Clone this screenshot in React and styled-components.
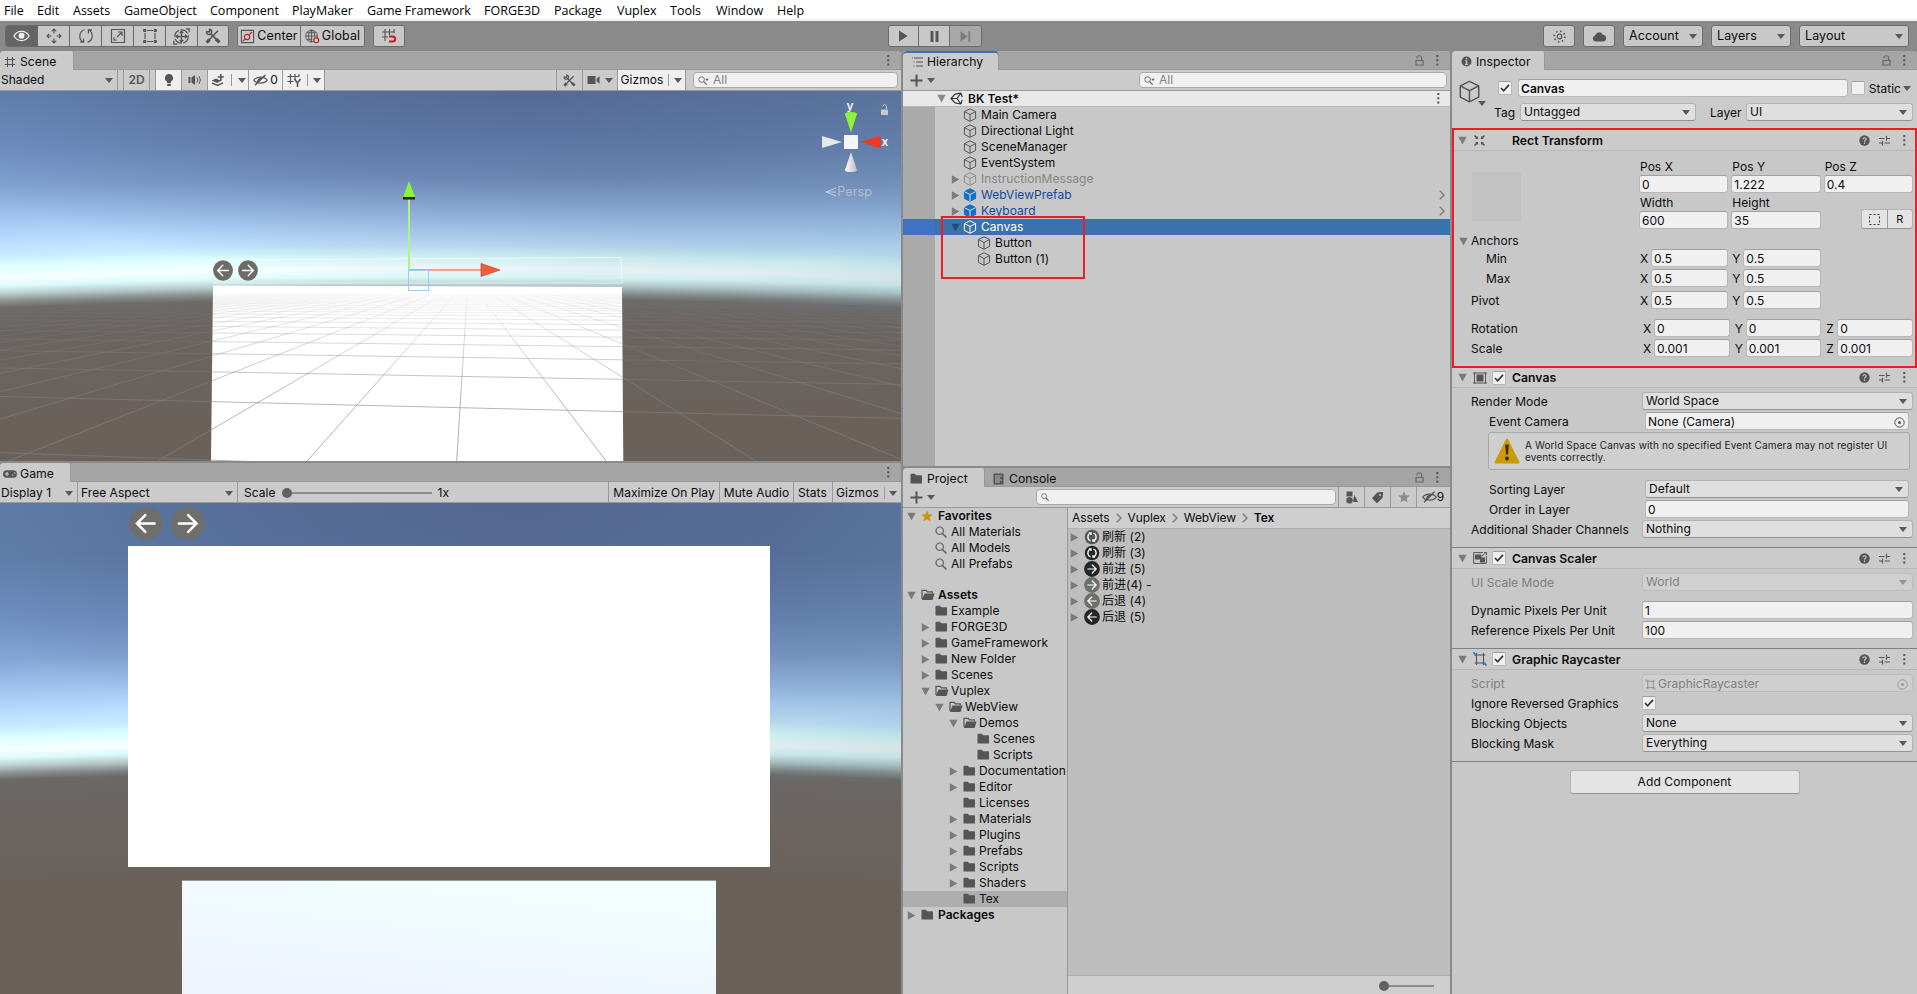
import styled, { createGlobalStyle, css } from 'styled-components';

const GlobalStyle = createGlobalStyle`
  *, *::before, *::after {
    box-sizing: border-box;
  }

  body {
    margin: 0;
    overflow: hidden;
    background: #8a8a8a;
    color: #0c0c0c;
    font-family: Inter, 'Noto Sans CJK SC', sans-serif;
    font-size: 12px;
    letter-spacing: 0.04px;
    line-height: 16px;
    white-space: nowrap;
  }

  svg {
    display: block;
    flex: none;
  }
`;

/* ---------- icons ---------- */

const Svg = ({ w = 16, h, box = '0 0 16 16', color = '#555', children, ...rest }) => (
  <svg
    width={w}
    height={h || w}
    viewBox={box}
    fill="none"
    stroke={color}
    strokeWidth="1.2"
    {...rest}
  >
    {children}
  </svg>
);

const Caret = ({ color = '#585858' }) => (
  <Svg w={8} h={5} box="0 0 8 5">
    <path d="M0 0h8L4 5z" fill={color} stroke="none" />
  </Svg>
);

const Fold = ({ open, color = '#7b7b7b' }) => (
  <Svg w={9} h={9} box="0 0 9 9">
    <path d={open ? 'M.3 .7h8.4L4.5 8.5z' : 'M.8 .2v8.6L8.4 4.5z'} fill={color} stroke="none" />
  </Svg>
);

const Kebab = () => (
  <Svg w={3} h={11} box="0 0 3 11">
    <path d="M.3 0h2v2h-2zM.3 4.3h2v2h-2zM.3 8.6h2v2h-2z" fill="#555" stroke="none" />
  </Svg>
);

const Lock = () => (
  <Svg w={9} h={11} box="0 0 9 11" color="#666">
    <path d="M2 3.5V2.7C2 .1 6.6 .1 6.6 2.7V5.5M1 5.5h7v4.5H1z" />
  </Svg>
);

const Cube = ({ size = 14, color = '#555', fill = 'none', line }) => (
  <Svg w={size} box="0 0 14 14" color={color} strokeWidth={size > 16 ? 0.9 : 1}>
    <path d="M7 .8l5.6 2.8v6.8L7 13.3 1.4 10.4V3.6z" fill={fill} strokeLinejoin="round" />
    <path d="M1.4 3.6L7 6.5l5.6-2.9M7 6.5v6.8" stroke={line || color} />
  </Svg>
);

const Folder = () => (
  <Svg w={13} h={12} box="0 0 13 12">
    <path d="M.5 1.5q0-.8.8-.8h3.6l1.3 1.6h5q.8 0 .8.8v7.4H.5z" fill="#555" stroke="none" />
  </Svg>
);

const FolderOpen = () => (
  <Svg w={14} h={12} box="0 0 14 12">
    <path d="M1 10V1.3h4.2l1.2 1.5h4.9v1.5" stroke="#555" />
    <path d="M3.5 4.6h10L11.6 11H.9z" fill="#555" stroke="none" />
  </Svg>
);

const SearchGlass = ({ size = 12, menu }) => (
  <Svg w={menu ? size + 2 : size} h={size} box={menu ? '0 0 14.5 12' : '0 0 12 12'} color="#666" strokeWidth="1.2">
    <circle cx="4.7" cy="4.7" r="3.7" />
    <path d="M7.5 7.5l4 4" strokeWidth="1.6" />
    {menu && <path d="M9.4 3.6h5l-2.5 3z" fill="#666" stroke="none" />}
  </Svg>
);

const Plus = () => (
  <Svg w={13} box="0 0 13 13">
    <path d="M6.5 .5v12M.5 6.5h12" strokeWidth="2" />
  </Svg>
);

const HiddenEye = () => (
  <Svg w={15} h={12} box="0 0 15 12">
    <path d="M.8 6.2C3.6 2 11.4 2 14.2 6.2 11.4 10.2 3.6 10.2 .8 6.2z" />
    <path d="M4 9C3.4 5 7 3 10 3.6L5 9z" fill="#555" stroke="none" />
    <path d="M2 11.3L12.5 .7" strokeWidth="1.4" />
  </Svg>
);

const ToolsIcon = ({ size = 16 }) => (
  <Svg w={size}>
    <path d="M3.5 12.5L13 2.8" strokeWidth="1.6" />
    <path d="M1.6 14.6l3-3.2" strokeWidth="3.2" />
    <path d="M5.6 5.6l6 6" strokeWidth="1.6" />
    <path d="M11 11l3.4 3.4" strokeWidth="3.2" />
    <path d="M1.5 3.6A2.6 2.6 0 1 0 4.6 1.3L4.4 4z" strokeWidth="1.5" />
  </Svg>
);

const GridIcon = () => (
  <Svg w={12} box="0 0 12 12" strokeWidth="1.1">
    <path d="M3.5 1v10M8.5 1v10M.8 3.5h10.4M.8 8.5h10.4" />
  </Svg>
);

const Target = ({ color = '#555' }) => (
  <Svg w={11} box="0 0 11 11" color={color} strokeWidth="1">
    <circle cx="5.5" cy="5.5" r="4.7" />
    <circle cx="5.5" cy="5.5" r="1.5" fill={color} stroke="none" />
  </Svg>
);

const Tick = () => (
  <Svg w={10} h={8} box="0 0 10 8" color="#333" strokeWidth="1.6">
    <path d="M1 4l2.6 2.8L9 .9" />
  </Svg>
);

const Star = ({ color }) => (
  <Svg w={12} box="0 0 12 12">
    <path
      d="M6 .3l1.6 3.9 4.2.3-3.2 2.7 1 4.2L6 9.2l-3.6 2.2 1-4.2L.2 4.5l4.2-.3z"
      fill={color}
      stroke="none"
    />
  </Svg>
);

const Help = () => (
  <Svg w={11} box="0 0 11 11">
    <circle cx="5.5" cy="5.5" r="5.2" fill="#555" stroke="none" />
    <path d="M3.9 4.2C4 2.2 7.2 2.3 7.1 4.2 7 5.2 5.6 5.2 5.5 6.7M5.5 7.5v1.4" stroke="#cbcbcb" />
  </Svg>
);

const Preset = () => (
  <Svg w={11} box="0 0 11 11" strokeWidth="1.1">
    <path d="M0 3.5h5.5M8 3.5h3M7.5 .8v5M0 8h3M5.5 8H11M3.5 5.8v4.6" />
  </Svg>
);

const Chevron = () => (
  <Svg w={6} h={10} box="0 0 6 10" color="#7d7d7d" strokeWidth="1.4">
    <path d="M.8 .8L5 5 .8 9.2" />
  </Svg>
);

const RoundArrow = ({ size = 16, color, back }) => (
  <Svg w={size} box="0 0 32 32">
    <circle cx="16" cy="16" r="15.8" fill={color} stroke="none" />
    <path
      d="M7.5 16h16.5M16.4 8l8 8-8 8"
      stroke="#fff"
      strokeWidth="2.4"
      strokeLinecap="round"
      transform={back ? 'rotate(180 16 16)' : undefined}
    />
  </Svg>
);

const RoundRefresh = ({ color }) => (
  <Svg w={16} box="0 0 32 32">
    <circle cx="16" cy="16" r="14.5" fill={color} stroke="none" />
    <path
      d="M13 8c-7 3-7 13 0 16M19 8c7 3 7 13 0 16M10 8h4v4M22 24h-4v-4"
      stroke="#fff"
      strokeWidth="2.6"
    />
  </Svg>
);

const RaycasterIcon = ({ size = 14, color = '#555', accent = '#2b7fc4' }) => (
  <Svg w={size} box="0 0 14 14" color={color}>
    <path d="M3.5 1v12M10.5 1v12M1.5 3h11M1.5 11h11" strokeWidth="1.1" />
    <path d="M.3 .3l3 3M11.5 11.5l2 2" stroke={accent} strokeWidth="1.8" />
  </Svg>
);

const moveIcon = (
  <Svg>
    <path d="M8 1v4.5M8 10.5V15M1 8h4.5M10.5 8H15M5.8 3.2L8 1l2.2 2.2M5.8 12.8L8 15l2.2-2.2M3.2 5.8L1 8l2.2 2.2M12.8 5.8L15 8l-2.2 2.2" />
  </Svg>
);
const rotateIcon = (
  <Svg>
    <path d="M6.5 1.7C.5 3.5 .4 11.5 5.3 14M2 14.2h3.6v-3.6M9.5 14.3c6-1.8 6.1-9.8 1.2-12.3M14 1.8h-3.6v3.6" />
  </Svg>
);
const scaleIcon = (
  <Svg>
    <path d="M1.5 1.5h13v13h-13zM4 9.2V12h2.8M7 9l4.7-4.7M8 4h4v4" />
  </Svg>
);
const rectIcon = (
  <Svg>
    <path d="M3 5v6M13 5v6M5 2.5h6M5 13.5h6" />
    <path d="M1.2 1h3v3h-3zM11.8 1h3v3h-3zM1.2 12h3v3h-3zM11.8 12h3v3h-3z" fill="#555" stroke="none" />
  </Svg>
);
const transformIcon = (
  <Svg w={17}>
    <circle cx="8" cy="8" r="6.3" strokeDasharray="8 1.5" />
    <path d="M8 3v10M3 8h10M6.3 4.7L8 3l1.7 1.7M6.3 11.3L8 13l1.7-1.7M4.7 6.3L3 8l1.7 1.7M11.3 6.3L13 8l-1.7 1.7M12 .8h3.2V4M.8 12v3.2H4" />
  </Svg>
);
const eyeIcon = (
  <Svg w={17} h={14} box="0 0 17 14" color="#eee">
    <path d="M.9 7C4.5 .9 12.5 .9 16.1 7 12.5 13.1 4.5 13.1 .9 7z" />
    <circle cx="8.5" cy="6.8" r="3" fill="#eee" stroke="none" />
  </Svg>
);

/* ---------- menu and main toolbar ---------- */

const Editor = styled.div`
  display: flex;
  flex-direction: column;
  width: 1917px;
  height: 994px;
`;

const MenuBar = styled.nav`
  display: flex;
  height: 21px;
  padding-left: 4px;
  background: #fff;
  border-bottom: 2px solid #f0f0f0;
  font-family: 'Open Sans', 'Noto Sans', sans-serif;
  font-size: 12.5px;
  line-height: 21px;
  letter-spacing: 0;
`;

const MenuItem = styled.span`
  width: ${(p) => p.$w}px;
  color: #000;
`;

const MainBar = styled.div`
  display: flex;
  align-items: center;
  height: 30px;
  padding: 0 8px 0 5px;
  background: #8a8a8a;
`;

const ButtonGroup = styled.div`
  display: flex;
  height: 22px;
  margin-right: 8px;
  border: 1px solid #6b6b6b;
  border-radius: 3px;
  overflow: hidden;
`;

const ToolButton = styled.button`
  display: flex;
  align-items: center;
  justify-content: center;
  gap: 2px;
  width: ${(p) => p.$w || 32}px;
  padding: 0;
  border: 0;
  border-right: 1px solid #6b6b6b;
  background: ${(p) => (p.$on ? '#656565' : p.$off ? '#a8a8a8' : '#c8c8c8')};
  color: inherit;
  font: inherit;
  font-size: 12.5px;
  letter-spacing: 0.1px;

  &:last-child {
    border-right: 0;
  }
`;

const Selects = styled.div`
  display: flex;
  gap: 8px;
`;

const MainSelect = styled.div`
  display: flex;
  align-items: center;
  justify-content: space-between;
  width: ${(p) => p.$w}px;
  height: 22px;
  padding: 0 5px;
  border: 1px solid #6b6b6b;
  border-radius: 3px;
  background: #c8c8c8;
  font-size: 12.5px;
  letter-spacing: 0.1px;
`;

const Push = styled.span`
  flex: ${(p) => (p.$w ? 'none' : 1)};
  width: ${(p) => (p.$w ? `${p.$w}px` : 'auto')};
`;

/* ---------- shared panel parts ---------- */

const Workspace = styled.div`
  display: grid;
  grid-template-columns: 901px 547px 465px;
  column-gap: 2px;
  height: 943px;
`;

const Column = styled.div`
  display: grid;
  grid-template-rows: ${(p) => p.$rows};
  row-gap: 2px;
  min-width: 0;
  min-height: 0;
`;

const Panel = styled.section`
  position: relative;
  display: flex;
  flex-direction: column;
  min-width: 0;
  min-height: 0;
  border-radius: 4px 4px 0 0;
  background: #c8c8c8;
  overflow: hidden;
`;

const TabBar = styled.header`
  display: flex;
  align-items: center;
  flex: none;
  height: 19px;
  padding-right: 11px;
  background: #a5a5a5;
  border-bottom: 1px solid #999;
`;

const Tab = styled.div`
  display: flex;
  align-items: center;
  gap: ${(p) => p.$gap || 5}px;
  width: ${(p) => p.$w}px;
  height: 19px;
  margin-bottom: -1px;
  padding: 2px 0 0 ${(p) => p.$pad}px;
  font-size: 12.2px;
  ${(p) =>
    p.$active &&
    css`
      background: #cbcbcb;
      border-right: 1px solid #999;
      border-radius: 3px 3px 0 0;
    `}
  ${(p) => p.$focus && 'box-shadow: inset 0 2px 0 #3a72b0;'}
`;

const TabTools = styled.div`
  display: flex;
  align-items: center;
  gap: 12px;
  margin-left: auto;
`;

const Toolbar = styled.div`
  display: flex;
  align-items: center;
  flex: none;
  height: 21px;
  background: #cbcbcb;
  border-bottom: 1px solid #999;
`;

const Cell = styled.div`
  display: flex;
  align-items: center;
  justify-content: ${(p) => p.$align || 'center'};
  gap: ${(p) => p.$gap || 0}px;
  flex: none;
  width: ${(p) => p.$w}px;
  height: 20px;
  padding: ${(p) => (p.$low ? 2 : 0)}px ${(p) => p.$pad || 0}px 0;
  border-right: 1px solid ${(p) => (p.$plain ? 'transparent' : '#999')};
  background: ${(p) => (p.$on ? '#efefef' : 'transparent')};
  color: ${(p) => p.$color || 'inherit'};
  font-weight: ${(p) => (p.$bold ? 600 : 400)};
`;

const Split = styled.i`
  width: 1px;
  height: 12px;
  background: #999;
`;

const Search = styled.div`
  display: flex;
  align-items: center;
  gap: 4px;
  width: ${(p) => p.$w}px;
  height: 16px;
  margin: ${(p) => p.$m || '0'};
  padding-left: 4px;
  border: 1px solid #a9a9a9;
  border-radius: 4px;
  background: #f0f0f0;
  color: #838383;
`;

const SliderTrack = styled.div`
  display: flex;
  align-items: center;
  width: ${(p) => p.$w}px;

  &::before {
    content: '';
    width: 10px;
    height: 10px;
    border-radius: 50%;
    background: #616161;
  }

  &::after {
    content: '';
    flex: 1;
    height: 2px;
    background: #8c8c8c;
  }
`;

/* ---------- viewports ---------- */

const Viewport = styled.div`
  position: relative;
  flex: 1;
  min-height: 0;
  overflow: hidden;
  /* sky over a slightly curved horizon, darker towards the zenith */
  background:
    radial-gradient(
      ellipse 620px ${(p) => p.$h * 0.9}px at 57% 0,
      rgba(58, 68, 108, 0.42),
      rgba(58, 70, 112, 0.32) 45%,
      rgba(58, 70, 112, 0) 100%
    ),
    linear-gradient(90deg, rgba(90, 120, 140, 0) 55%, rgba(90, 120, 140, 0.2)) 0 0 / 100%
      ${(p) => p.$h}px no-repeat,
    radial-gradient(
      circle 11700px at 455px ${(p) => p.$h + 11219}px,
      #6a615b 0 11120px,
      #6a6562 11205px,
      #6c6866 11228px,
      #868c8a 11234px,
      #b8cccb 11242px,
      #dcfbfb 11250px,
      #f6ffff 11258px,
      #dcffff 11270px,
      #c8eaff 11281px,
      #b8dcff 11296px,
      #a0c4f0 11318px,
      #83a4d4 11350px,
      #7191c4 11388px,
      #6482ae 11450px,
      #6380ac 11520px
    );
`;

const Drawing = styled.svg`
  width: 100%;
  height: 100%;
`;

const Persp = styled.span`
  position: absolute;
  right: 29px;
  top: 93px;
  color: #c8cdd4;
  font-size: 12.5px;
  letter-spacing: 0.1px;
  opacity: 0.75;
`;

// Floor grid in one-point perspective.
const VP = { x: 468, y: 189 };
const depthLines = Array.from({ length: 36 }, (_, i) => VP.x - 11.3 + (i - 18) * 149.5);
const crossLines = Array.from({ length: 26 }, (_, i) => 1 / (0.00528 + i * 0.00254));

function FloorGrid() {
  return (
    <g stroke="url(#fade)" strokeWidth="1" fill="none">
      {depthLines.map((x) => (
        <line key={x} x1={VP.x} y1={VP.y} x2={x} y2={VP.y + 181} />
      ))}
      {crossLines.map((d) => {
        const slope = d * 0.00019;
        return (
          <line
            key={d}
            x1="0"
            y1={VP.y + d - 468 * slope}
            x2="901"
            y2={VP.y + d + 433 * slope}
          />
        );
      })}
    </g>
  );
}

function SceneView() {
  return (
    <Viewport $h={217}>
      <Drawing viewBox="0 0 901 370">
        <defs>
          <linearGradient id="fade" gradientUnits="userSpaceOnUse" x1="0" y1="200" x2="0" y2="370">
            <stop offset="0" stopColor="#808080" stopOpacity="0" />
            <stop offset=".25" stopColor="#808080" stopOpacity=".26" />
            <stop offset=".6" stopColor="#808080" stopOpacity=".55" />
            <stop offset="1" stopColor="#808080" stopOpacity=".65" />
          </linearGradient>
          <linearGradient id="cone" x1="0" x2="1">
            <stop offset="0" stopColor="#fff" />
            <stop offset="1" stopColor="#b9bdc4" />
          </linearGradient>
        </defs>
        <path d="M213 194.5L622 196l1.3 174H211z" fill="#fff" />
        <FloorGrid />
        <path d="M213 174v-5L621 166.500l1 25.500H213" fill="none" stroke="#fff" strokeOpacity=".6" />
        <g>
          <path d="M409 108v71" stroke="#adf57e" strokeWidth="2" />
          <path d="M403 105.500h12v3h-12z" fill="#1c2a14" />
          <path d="M409 90l6 16h-12z" fill="#8df43a" />
          <path d="M409 179h72" stroke="#ff9b8b" strokeWidth="2" />
          <path d="M481 172.500v13l19-6.500z" fill="#f85a3a" stroke="#a83a26" strokeWidth=".6" />
          <rect x="408.500" y="179.500" width="20" height="20" fill="none" stroke="#9ccaf6" />
        </g>
        <g>
          <svg x="213" y="169" width="20" height="21" preserveAspectRatio="none" viewBox="0 0 32 32">
            <RoundArrow size={32} color="#6d6a68" back />
          </svg>
          <svg x="238" y="169" width="20" height="21" preserveAspectRatio="none" viewBox="0 0 32 32">
            <RoundArrow size={32} color="#6d6a68" />
          </svg>
        </g>
        <g>
          <rect x="844" y="44" width="14" height="14" fill="#f3f5f9" />
          <path d="M845 23q0-2 6-2t6 2l-6 18.500z" fill="#8df43a" />
          <path d="M845 79q0 2 6 2t6-2l-6-18z" fill="url(#cone)" />
          <path d="M822 45v12l20-6z" fill="#e4e7ec" />
          <path d="M879 45q2 0 2 6t-2 6l-18-6z" fill="#ee3a20" />
          <path d="M836 97l-10 4 10 4M826 101h10" fill="none" stroke="#c3cedd" />
          <path d="M881 18.500h7v5.500h-7z" fill="#c4c8cf" />
          <path d="M882.500 15q2.500-3 4 0v3" fill="none" stroke="#c4c8cf" />
          <text x="846.500" y="19" fill="#f2f4f8" fontSize="12" fontWeight="600">
            y
          </text>
          <text x="881.500" y="55" fill="#f2f4f8" fontSize="12" fontWeight="600">
            x
          </text>
        </g>
      </Drawing>
      <Persp>Persp</Persp>
    </Viewport>
  );
}

function GameView() {
  return (
    <Viewport $h={277}>
      <Drawing viewBox="0 0 901 491">
        <defs>
          <linearGradient id="keys" x1=".8" y1="0" x2=".35" y2="1">
            <stop offset="0" stopColor="#f3ffff" />
            <stop offset=".6" stopColor="#f0f8ff" />
            <stop offset="1" stopColor="#eef5fd" />
          </linearGradient>
        </defs>
        <rect x="128" y="43" width="642" height="321" fill="#fff" />
        <rect x="182" y="377" width="534" height="114" fill="url(#keys)" />
        <path d="M182 377.500h534" stroke="#9b9a98" />
        <svg x="129" y="3.500" width="33.500" height="34" viewBox="0 0 32 32">
          <RoundArrow size={32} color="#6e6e6a" back />
        </svg>
        <svg x="171" y="3.500" width="33.500" height="34" viewBox="0 0 32 32">
          <RoundArrow size={32} color="#6e6e6a" />
        </svg>
      </Drawing>
    </Viewport>
  );
}

function ScenePanel() {
  return (
    <Panel>
      <TabBar>
        <Tab $active $w={74} $pad={4} $gap={4}>
          <GridIcon />
          Scene
        </Tab>
        <TabTools>
          <Kebab />
        </TabTools>
      </TabBar>
      <Toolbar>
        <Cell $w={118} $pad={1}>
          Shaded
          <Push />
          <Caret />
          <Push $w={3} />
        </Cell>
        <Cell $w={6} />
        <Cell $w={26} $bold $color="#555">
          2D
        </Cell>
        <Cell $w={6} />
        <Cell $w={26} $on>
          <Svg w={10} h={14} box="0 0 10 14">
            <path
              d="M5 1a4 4 0 0 1 2 7.500V10H3V8.500A4 4 0 0 1 5 1zM3.300 10.800h3.400V13H3.300z"
              fill="#555"
              stroke="none"
            />
          </Svg>
        </Cell>
        <Cell $w={26}>
          <Svg w={14} h={12} box="0 0 14 12">
            <path d="M.5 3h2v6h-2zM3.500 3.500L7 1v10L3.500 8.500z" fill="#555" stroke="none" />
            <path d="M9 3.500q1.500 2.500 0 5M11 2q2.800 4 0 8" strokeWidth="1" />
          </Svg>
        </Cell>
        <Cell $w={41} $on $gap={6}>
          <Svg w={14} h={13} box="0 0 14 13">
            <path d="M.5 6.500L5 4.500l3 1.500 4-.5-5.500 3.500z" fill="#555" stroke="none" />
            <path d="M1 8.800l5.500 2.700L12 8.800" strokeWidth="1.400" />
            <path d="M9.800 0v6M6.800 3h6" strokeWidth="1.500" />
          </Svg>
          <Split />
          <Caret />
        </Cell>
        <Cell $w={34} $on $gap={2}>
          <HiddenEye />0
        </Cell>
        <Cell $w={42} $on $gap={5}>
          <Svg w={15} h={14} box="0 0 15 14">
            <path d="M3.500 1v10M8 1v6M.5 3.500h12M.5 8.500h6M12 1v2" />
            <path d="M7.500 6l3 4 3-4M10.500 10v4" strokeWidth="1.600" />
          </Svg>
          <Split />
          <Caret />
        </Cell>
        <Push />
        <Cell $w={1} />
        <Cell $w={26}>
          <ToolsIcon size={13} />
        </Cell>
        <Cell $w={35} $gap={5}>
          <Svg w={13} h={10} box="0 0 13 10">
            <path d="M.5 1h8v8h-8zM9.500 4l3-3v8l-3-3z" fill="#555" stroke="none" />
          </Svg>
          <Caret />
        </Cell>
        <Cell $w={68} $on $gap={5}>
          Gizmos
          <Split />
          <Caret />
        </Cell>
        <Search $w={205} $m="0 3px 0 7px">
          <SearchGlass size={9} menu />
          <span>All</span>
        </Search>
      </Toolbar>
      <SceneView />
    </Panel>
  );
}

function GamePanel() {
  return (
    <Panel>
      <TabBar>
        <Tab $active $w={71} $pad={3} $gap={3}>
          <Svg w={14} h={10} box="0 0 14 10">
            <rect x="0" y="1.300" width="14" height="7.400" rx="3.700" fill="#555" stroke="none" />
            <path d="M2 5h4M4 3v4M9 6h1.500M11 4h1.500" stroke="#cbcbcb" />
          </Svg>
          Game
        </Tab>
        <TabTools>
          <Kebab />
        </TabTools>
      </TabBar>
      <Toolbar>
        <Cell $w={78} $pad={1} $low>
          Display 1
          <Push />
          <Caret />
          <Push $w={3} />
        </Cell>
        <Cell $w={160} $pad={3} $low>
          Free Aspect
          <Push />
          <Caret />
          <Push $w={1} />
        </Cell>
        <Cell $w={371} $align="flex-start" $pad={6} $gap={6} $low>
          Scale
          <SliderTrack $w={150} />
          1x
        </Cell>
        <Cell $w={111} $low>
          Maximize On Play
        </Cell>
        <Cell $w={74} $low>
          Mute Audio
        </Cell>
        <Cell $w={39} $align="flex-start" $pad={4} $low>
          Stats
        </Cell>
        <Cell $w={68} $plain $align="flex-start" $pad={3} $gap={5} $low>
          Gizmos
          <Split />
          <Caret />
        </Cell>
      </Toolbar>
      <GameView />
    </Panel>
  );
}

/* ---------- hierarchy ---------- */

const SceneRow = styled.div`
  display: flex;
  align-items: center;
  gap: 4px;
  height: 16px;
  padding: 0 10px 0 34px;
  background: #e8e8e8;
  border-bottom: 1px solid #b8b8b8;
  font-weight: 600;
`;

const ObjectList = styled.div`
  flex: 1;
  background: linear-gradient(90deg, #aaa 32px, #c8c8c8 32px);
`;

const ObjectRow = styled.div`
  display: flex;
  align-items: center;
  height: 16px;
  padding: 0 5px 0 ${(p) => 48 + p.$depth * 14}px;
  color: ${(p) => p.$color};
  ${(p) => p.$selected && 'background: linear-gradient(90deg, #3e73c4 32px, #3a72b0 32px);'}
`;

const FoldSlot = styled.span`
  display: flex;
  width: ${(p) => p.$w || 13}px;
`;

const RowLabel = styled.span`
  flex: 1;
  margin-left: ${(p) => p.$gap || 3}px;
`;

const Highlight = styled.div`
  position: absolute;
  left: ${(p) => p.$x}px;
  top: ${(p) => p.$y}px;
  width: ${(p) => p.$w}px;
  height: ${(p) => p.$h}px;
  border: 2px solid #ee1c25;
  pointer-events: none;
`;

const objects = [
  { name: 'Main Camera' },
  { name: 'Directional Light' },
  { name: 'SceneManager' },
  { name: 'EventSystem' },
  { name: 'InstructionMessage', fold: 'closed', state: 'inactive' },
  { name: 'WebViewPrefab', fold: 'closed', state: 'prefab' },
  { name: 'Keyboard', fold: 'closed', state: 'prefab' },
  { name: 'Canvas', fold: 'open', state: 'selected' },
  { name: 'Button', depth: 1 },
  { name: 'Button (1)', depth: 1 },
];

const objectColors = {
  inactive: { text: '#868686', cube: '#909090' },
  prefab: { text: '#154a96', cube: '#1470cc' },
  selected: { text: '#fff', cube: '#fff' },
  normal: { text: '#0c0c0c', cube: '#555' },
};

function HierarchyPanel() {
  return (
    <Panel>
      <TabBar>
        <Tab $active $focus $w={96} $pad={9} $gap={4}>
          <Svg w={11} h={10} box="0 0 11 10" strokeWidth="1.100">
            <path d="M2 1h9M4 5h7M4 9h7M0 1h1M1.500 5h1M1.500 9h1" />
          </Svg>
          Hierarchy
        </Tab>
        <TabTools>
          <Lock />
          <Kebab />
        </TabTools>
      </TabBar>
      <Toolbar>
        <Push $w={7} />
        <Plus />
        <Push $w={4} />
        <Caret />
        <Push />
        <Search $w={308} $m="0 3px 0 0">
          <SearchGlass size={9} menu />
          <span>All</span>
        </Search>
      </Toolbar>
      <SceneRow>
        <Fold open color="#8a8a8a" />
        <Svg w={13} box="0 0 13 13" color="#333">
          <path d="M5 2.200L1 6.500l4 4.300M5 2.200l6-1.200M5 10.800l6 1.200M11 1l1.200 4.200M11 12l1.200-4.200M1 6.500h6M7 6.500l4-5.500M7 6.500l4 5.500" />
        </Svg>
        <RowLabel $gap={1}>BK Test*</RowLabel>
        <Kebab />
      </SceneRow>
      <ObjectList>
        {objects.map(({ name, fold, state = 'normal', depth = 0 }) => {
          const { text, cube } = objectColors[state];
          const prefab = state === 'prefab';
          return (
            <ObjectRow key={name} $depth={depth} $color={text} $selected={state === 'selected'}>
              <FoldSlot $w={12}>
                {fold && <Fold open={fold === 'open'} color={state === 'selected' ? '#254a73' : undefined} />}
              </FoldSlot>
              <Cube color={cube} fill={prefab ? cube : 'none'} line={prefab ? '#cfe0f2' : undefined} />
              <RowLabel $gap={4}>{name}</RowLabel>
              {prefab && <Chevron />}
            </ObjectRow>
          );
        })}
      </ObjectList>
      <Highlight $x={38} $y={165} $w={144} $h={63} />
    </Panel>
  );
}

/* ---------- project ---------- */

const ProjectBody = styled.div`
  display: grid;
  grid-template-columns: 165px 1fr;
  flex: 1;
  min-height: 0;
`;

const Tree = styled.div`
  border-right: 1px solid #999;
  overflow: hidden;
`;

const TreeRow = styled.div`
  display: flex;
  align-items: center;
  height: 16px;
  padding-left: ${(p) => 4 + p.$depth * 14}px;
  background: ${(p) => (p.$selected ? '#aeaeae' : 'transparent')};
  font-weight: ${(p) => (p.$bold ? 600 : 400)};
`;

const TreeGap = styled.div`
  height: 15px;
`;

const IconSlot = styled.span`
  display: flex;
  width: 14px;
`;

const Files = styled.div`
  display: flex;
  flex-direction: column;
  background: #bebebe;
`;

const Breadcrumb = styled.div`
  display: flex;
  align-items: center;
  gap: 6px;
  height: 21px;
  padding-left: 4px;
  background: #cfcfcf;
  border-bottom: 1px solid #b0b0b0;
  letter-spacing: -0.1px;

  b {
    font-weight: 600;
  }
`;

const FileRow = styled.div`
  display: flex;
  align-items: center;
  height: 16px;
  padding-left: 2px;
`;

const FileList = styled.div`
  flex: 1;
`;

const ZoomBar = styled.div`
  display: flex;
  align-items: center;
  justify-content: flex-end;
  height: 19px;
  padding: 2px 16px 0 0;
  background: #cfcfcf;
  border-top: 1px solid #b0b0b0;
`;

const tree = [
  ['Favorites', 0, 'star', 'open'],
  ['All Materials', 1, 'search'],
  ['All Models', 1, 'search'],
  ['All Prefabs', 1, 'search'],
  null,
  ['Assets', 0, 'folder', 'open'],
  ['Example', 1, 'folder'],
  ['FORGE3D', 1, 'folder', 'closed'],
  ['GameFramework', 1, 'folder', 'closed'],
  ['New Folder', 1, 'folder', 'closed'],
  ['Scenes', 1, 'folder', 'closed'],
  ['Vuplex', 1, 'folder', 'open'],
  ['WebView', 2, 'folder', 'open'],
  ['Demos', 3, 'folder', 'open'],
  ['Scenes', 4, 'folder'],
  ['Scripts', 4, 'folder'],
  ['Documentation', 3, 'folder', 'closed'],
  ['Editor', 3, 'folder', 'closed'],
  ['Licenses', 3, 'folder'],
  ['Materials', 3, 'folder', 'closed'],
  ['Plugins', 3, 'folder', 'closed'],
  ['Prefabs', 3, 'folder', 'closed'],
  ['Scripts', 3, 'folder', 'closed'],
  ['Shaders', 3, 'folder', 'closed'],
  ['Tex', 3, 'folder'],
  ['Packages', 0, 'folder', 'closed'],
];

const files = [
  ['刷新 (2)', <RoundRefresh color="#555" />],
  ['刷新 (3)', <RoundRefresh color="#262626" />],
  ['前进 (5)', <RoundArrow color="#262626" />],
  ['前进(4) -', <RoundArrow color="#6e6e6a" />],
  ['后退 (4)', <RoundArrow color="#6e6e6a" back />],
  ['后退 (5)', <RoundArrow color="#262626" back />],
];

function treeIcon(icon, fold) {
  if (icon === 'star') return <Star color="#c99700" />;
  if (icon === 'search') return <SearchGlass />;
  return fold === 'open' ? <FolderOpen /> : <Folder />;
}

function ProjectPanel() {
  return (
    <Panel>
      <TabBar>
        <Tab $active $w={82} $pad={7} $gap={4}>
          <Folder />
          Project
        </Tab>
        <Tab $w={90} $pad={8}>
          <Svg w={11} h={12} box="0 0 11 12">
            <path d="M.5 .5h10v11H.5z" fill="#555" stroke="none" />
            <path d="M2 3h7M2 5h5M2 7h7M2 9h5" stroke="#bbb" strokeWidth="1" />
          </Svg>
          Console
        </Tab>
        <TabTools>
          <Lock />
          <Kebab />
        </TabTools>
      </TabBar>
      <Toolbar>
        <Push $w={7} />
        <Plus />
        <Push $w={4} />
        <Caret />
        <Push />
        <Search $w={300} $m="0">
          <SearchGlass size={8} />
        </Search>
        <Cell $w={3} />
        <Cell $w={26}>
          <Svg w={13} h={13} box="0 0 13 13">
            <path d="M1.500 .5h6v5h-6zM9.500 4l3.500 7H7.500z" fill="#555" stroke="none" />
            <circle cx="4.500" cy="9.200" r="3.500" fill="#555" stroke="#cbcbcb" strokeWidth=".5" />
          </Svg>
        </Cell>
        <Cell $w={26}>
          <Svg w={11} box="0 0 11 11">
            <path d="M5.500 1L10.500 .5 10 5.500 5 10.500.8 6.200z" fill="#555" />
            <circle cx="8" cy="3" r="1" fill="#cbcbcb" stroke="none" />
          </Svg>
        </Cell>
        <Cell $w={26}>
          <Star color="#8a8a8a" />
        </Cell>
        <Cell $w={33} $plain>
          <HiddenEye />9
        </Cell>
      </Toolbar>
      <ProjectBody>
        <Tree>
          {tree.map((item, i) => {
            if (!item) return <TreeGap key={i} />;
            const [name, depth, icon, fold] = item;
            const root = depth === 0;
            return (
              <TreeRow key={i} $depth={depth} $bold={root} $selected={name === 'Tex'}>
                <FoldSlot $w={14}>{fold && <Fold open={fold === 'open'} />}</FoldSlot>
                <IconSlot>{treeIcon(icon, fold)}</IconSlot>
                <RowLabel $gap={root ? 3 : 2}>{name}</RowLabel>
              </TreeRow>
            );
          })}
        </Tree>
        <Files>
          <Breadcrumb>
            <span>Assets</span>
            <Chevron />
            <span>Vuplex</span>
            <Chevron />
            <span>WebView</span>
            <Chevron />
            <b>Tex</b>
          </Breadcrumb>
          <FileList>
            {files.map(([name, icon]) => (
              <FileRow key={name}>
                <FoldSlot $w={14}>
                  <Fold />
                </FoldSlot>
                {icon}
                <RowLabel $gap={2}>{name}</RowLabel>
              </FileRow>
            ))}
          </FileList>
          <ZoomBar>
            <SliderTrack $w={55} />
          </ZoomBar>
        </Files>
      </ProjectBody>
    </Panel>
  );
}

/* ---------- inspector ---------- */

const ObjectHeader = styled.div`
  display: flex;
  gap: 18px;
  flex: none;
  height: 60px;
  padding: 9px 4px 0 6px;
  background: #cbcbcb;
`;

const ObjectIcon = styled.div`
  display: flex;
  align-items: flex-end;
  width: 22px;
  height: 27px;

  svg:first-child {
    margin-bottom: 3px;
  }

  svg:last-child {
    margin-left: -3px;
  }
`;

const HeaderLines = styled.div`
  display: flex;
  flex-direction: column;
  gap: 6px;
  flex: 1;
`;

const HeaderLine = styled.div`
  display: flex;
  align-items: center;
`;

const Field = styled.div`
  display: flex;
  align-items: center;
  flex: 1;
  min-width: 0;
  height: 18px;
  padding: 2px 2px 0;
  border: 1px solid #b7b7b7;
  border-top-color: #a0a0a0;
  border-radius: 3px;
  background: ${(p) => (p.$disabled ? '#cfcfcf' : '#f0f0f0')};
  color: ${(p) => (p.$disabled ? '#7f7f7f' : 'inherit')};
  font-weight: ${(p) => (p.$bold ? 600 : 400)};
  ${(p) => p.$disabled && 'border-color: #bdbdbd;'}
`;

const SelectBox = styled.div`
  display: flex;
  align-items: center;
  justify-content: space-between;
  flex: ${(p) => (p.$w ? 'none' : 1)};
  width: ${(p) => (p.$w ? `${p.$w}px` : 'auto')};
  height: 18px;
  padding: 0 5px 0 3px;
  border: 1px solid #b2b2b2;
  border-bottom-color: #939393;
  border-radius: 3px;
  background: #dfdfdf;
  ${(p) =>
    p.$disabled &&
    css`
      background: #d0d0d0;
      border-color: #bdbdbd;
      color: #7f7f7f;
    `}
`;

const CheckBox = styled.span`
  display: flex;
  align-items: center;
  justify-content: center;
  flex: none;
  width: 14px;
  height: 14px;
  border: 1px solid #b7b7b7;
  border-top-color: #a0a0a0;
  border-radius: 2px;
  background: #f0f0f0;
`;

const HeaderLabel = styled.span`
  width: ${(p) => p.$w}px;
  margin-left: ${(p) => p.$ml}px;
  padding-top: 2px;
`;

const StaticLabel = styled.span`
  padding: 1px 2px 0 4px;
`;

const ComponentHead = styled.div`
  display: flex;
  align-items: center;
  flex: none;
  height: ${(p) => p.$h || 21}px;
  padding: 0 11px 0 6px;
  background: #cbcbcb;
  border-bottom: 1px solid #b8b8b8;
`;

const ComponentTitle = styled.span`
  flex: 1;
  padding-top: 1px;
  font-weight: 600;
  font-size: 12.2px;
`;

const HeadIcon = styled.span`
  display: flex;
  width: 19px;
  margin-left: 6px;
`;

const HeadCheck = styled.span`
  display: flex;
  width: 20px;
`;

const HeadTools = styled.span`
  display: flex;
  align-items: center;
  gap: 9px;

  svg:last-child {
    margin-left: 4px;
  }
`;

const Body = styled.div`
  display: flex;
  flex-direction: column;
  gap: 2px;
  flex: none;
  height: ${(p) => p.$h}px;
  padding-top: 4px;
  border-bottom: 1px solid #7f7f7f;
`;

const PropRow = styled.div`
  display: flex;
  align-items: center;
  flex: none;
  height: 18px;
  margin-top: ${(p) => p.$mt || 0}px;
  padding: 0 ${(p) => (p.$nested ? 8 : 4)}px 0 ${(p) => (p.$nested ? 37 : 19)}px;
`;

const PropLabel = styled.span`
  flex: none;
  width: ${(p) => p.$w || 171}px;
  padding-top: 2px;
  color: ${(p) => (p.$disabled ? '#7f7f7f' : 'inherit')};
`;

const RectBody = styled.div`
  display: grid;
  grid-template-columns: 49px 1fr;
  column-gap: 118px;
  flex: none;
  height: 80px;
  padding: 7px 4px 0 20px;
`;

const AnchorBox = styled.div`
  height: 49px;
  margin-top: 14px;
  background: #c2c2c2;
`;

const PositionGrid = styled.div`
  display: grid;
  grid-template-columns: repeat(3, 1fr);
  grid-template-rows: 17px 18px 18px 18px;
  column-gap: 3px;
`;

const ColumnLabel = styled.span`
  align-self: end;
  padding-left: 1px;
`;

const VectorRow = styled.div`
  display: flex;
  align-items: center;
  flex: none;
  height: 18px;
  margin-top: ${(p) => p.$mt ?? 2}px;
  padding: 0 4px 0 ${(p) => p.$indent || 19}px;
`;

const VectorLabel = styled.span`
  display: flex;
  align-items: center;
  gap: 3px;
  flex: 1;
  padding-top: 2px;
`;

const Vector = styled.div`
  display: flex;
  gap: ${(p) => (p.$wide ? 3 : 4)}px;
  width: ${(p) => (p.$wide ? 274 : 271)}px;
`;

const Axis = styled.label`
  display: flex;
  align-items: center;
  flex: 1 1 0;
  min-width: 0;

  span {
    width: 12px;
    padding: 2px 0 0 1px;
  }
`;

const RectModes = styled.div`
  display: flex;
  justify-self: end;
  width: 52px;
  height: 20px;
  margin-top: -2px;
  border: 1px solid #b2b2b2;
  border-bottom-color: #939393;
  border-radius: 3px;
  background: #e4e4e4;

  span {
    display: flex;
    align-items: center;
    justify-content: center;
    flex: 1;
    font-size: 11px;
  }

  span + span {
    border-left: 1px solid #999;
  }
`;

const RectEnd = styled.div`
  flex: none;
  height: 11px;
`;

const Notice = styled.div`
  display: flex;
  align-items: center;
  gap: 5px;
  flex: none;
  height: 38px;
  margin: 0 7px 8px 36px;
  padding-left: 5px;
  border: 1px solid #a9a9a9;
  border-radius: 3px;
  background: #cfcfcf;
  color: #1c1c1c;
  font-size: 10px;
  letter-spacing: 0.13px;
  line-height: 12px;
`;

const AddButton = styled.button`
  align-self: center;
  width: 230px;
  height: 24px;
  margin-top: 8px;
  padding: 0;
  border: 1px solid #b2b2b2;
  border-bottom-color: #939393;
  border-radius: 3px;
  background: #e4e4e4;
  color: inherit;
  font: inherit;
  letter-spacing: 0.1px;
`;

const Select = ({ value, ...rest }) => (
  <SelectBox {...rest}>
    {value}
    <Caret color={rest.$disabled ? '#909090' : undefined} />
  </SelectBox>
);

const Check = () => (
  <CheckBox>
    <Tick />
  </CheckBox>
);

function Head({ title, icon, checked, height }) {
  return (
    <ComponentHead $h={height}>
      <Fold open />
      <HeadIcon>{icon}</HeadIcon>
      <HeadCheck>{checked && <Check />}</HeadCheck>
      <ComponentTitle>{title}</ComponentTitle>
      <HeadTools>
        <Help />
        <Preset />
        <Kebab />
      </HeadTools>
    </ComponentHead>
  );
}

function VectorField({ label, values, wide, indent, mt }) {
  return (
    <VectorRow $indent={indent} $mt={mt}>
      <VectorLabel>{label}</VectorLabel>
      <Vector $wide={wide}>
        {['X', 'Y', 'Z'].map((axis, i) => (
          <Axis key={axis}>
            {values[i] !== undefined && (
              <>
                <span>{axis}</span>
                <Field>{values[i]}</Field>
              </>
            )}
          </Axis>
        ))}
      </Vector>
    </VectorRow>
  );
}

function InspectorPanel() {
  return (
    <Panel>
      <TabBar>
        <Tab $active $w={93} $pad={9} $gap={4}>
          <Svg w={11} box="0 0 11 11">
            <circle cx="5.500" cy="5.500" r="5" fill="#555" stroke="none" />
            <path d="M5.500 2v1.500M4.300 4.900h1.300v3.500M4 8.300h3" stroke="#cbcbcb" />
          </Svg>
          Inspector
        </Tab>
        <TabTools>
          <Lock />
          <Kebab />
        </TabTools>
      </TabBar>
      <ObjectHeader>
        <ObjectIcon>
          <Cube size={23} />
          <Caret />
        </ObjectIcon>
        <HeaderLines>
          <HeaderLine>
            <Check />
            <Push $w={6} />
            <Field $bold>Canvas</Field>
            <Push $w={3} />
            <CheckBox />
            <StaticLabel>Static</StaticLabel>
            <Caret />
            <Push $w={2} />
          </HeaderLine>
          <HeaderLine>
            <HeaderLabel $w={26} $ml={-4}>
              Tag
            </HeaderLabel>
            <Select value="Untagged" $w={176} />
            <HeaderLabel $w={36} $ml={14}>
              Layer
            </HeaderLabel>
            <Select value="UI" />
          </HeaderLine>
        </HeaderLines>
      </ObjectHeader>

      <Head
        title="Rect Transform"
        icon={
          <Svg w={13} box="0 0 13 13" strokeWidth="1.600">
            <path d="M1.500 1.500l3.300 3.300M11.500 1.500L8.200 4.800M1.500 11.500l3.300-3.300M11.500 11.500L8.200 8.200" />
            <path
              d="M1 4.500h3.500V1M12 4.500H8.500V1M1 8.500h3.500V12M12 8.500H8.500V12"
              strokeWidth="1"
              strokeDasharray="0 1.500 4 10"
            />
          </Svg>
        }
      />
      <RectBody>
        <AnchorBox />
        <PositionGrid>
          <ColumnLabel>Pos X</ColumnLabel>
          <ColumnLabel>Pos Y</ColumnLabel>
          <ColumnLabel>Pos Z</ColumnLabel>
          <Field>0</Field>
          <Field>1.222</Field>
          <Field>0.4</Field>
          <ColumnLabel>Width</ColumnLabel>
          <ColumnLabel>Height</ColumnLabel>
          <span />
          <Field>600</Field>
          <Field>35</Field>
          <RectModes>
            <span>
              <Svg w={11} box="0 0 11 11" color="#333" strokeWidth="1">
                <path d="M.5 .5h10v10H.5z" strokeDasharray="2 2" />
              </Svg>
            </span>
            <span>R</span>
          </RectModes>
        </PositionGrid>
      </RectBody>
      <VectorRow $indent={7} $mt={0}>
        <VectorLabel>
          <Fold open />
          Anchors
        </VectorLabel>
      </VectorRow>
      <VectorField label="Min" values={['0.5', '0.5']} wide indent={34} mt={0} />
      <VectorField label="Max" values={['0.5', '0.5']} wide indent={34} />
      <VectorField label="Pivot" values={['0.5', '0.5']} wide mt={4} />
      <VectorField label="Rotation" values={['0', '0', '0']} mt={10} />
      <VectorField label="Scale" values={['0.001', '0.001', '0.001']} />
      <RectEnd />

      <Head
        title="Canvas"
        checked
        height={20}
        icon={
          <Svg w={14} h={12} box="0 0 14 12">
            <path d="M3.500 2.500h7v7h-7z" fill="#555" stroke="none" />
            <path d="M1.500 .5v11M12.500 .5v11M0 1h14M0 11h14" strokeWidth="1" />
          </Svg>
        }
      />
      <Body $h={160}>
        <PropRow>
          <PropLabel>Render Mode</PropLabel>
          <Select value="World Space" />
        </PropRow>
        <PropRow $nested>
          <PropLabel $w={156}>Event Camera</PropLabel>
          <Field>
            None (Camera)
            <Push />
            <Target />
            <Push $w={1} />
          </Field>
        </PropRow>
        <Notice>
          <Svg w={26} h={26} box="0 0 26 26">
            <path
              d="M13 1.500L24.500 24.500H1.500z"
              fill="#cc9a06"
              stroke="#cc9a06"
              strokeWidth="2"
              strokeLinejoin="round"
            />
            <path d="M11.200 6.500h3.600l-.8 10h-2z" fill="#3a2c00" stroke="none" />
            <circle cx="13" cy="20.500" r="2" fill="#3a2c00" stroke="none" />
          </Svg>
          <span>
            A World Space Canvas with no specified Event Camera may not register UI
            <br />
            events correctly.
          </span>
        </Notice>
        <PropRow $nested>
          <PropLabel $w={156}>Sorting Layer</PropLabel>
          <Select value="Default" />
        </PropRow>
        <PropRow $nested>
          <PropLabel $w={156}>Order in Layer</PropLabel>
          <Field>0</Field>
        </PropRow>
        <PropRow>
          <PropLabel>Additional Shader Channels</PropLabel>
          <Select value="Nothing" />
        </PropRow>
      </Body>

      <Head
        title="Canvas Scaler"
        checked
        icon={
          <Svg w={14} h={12} box="0 0 14 12">
            <path d="M10 .6H.6v10.800h12.800V4" strokeWidth="1" />
            <path d="M2 2.500h6.500v3H12v5H7V7.500H2z" fill="#555" stroke="none" />
            <path d="M9 4l4-3.500M11 .5h2.500V3" strokeWidth="1" />
          </Svg>
        }
      />
      <Body $h={80}>
        <PropRow>
          <PropLabel $disabled>UI Scale Mode</PropLabel>
          <Select value="World" $disabled />
        </PropRow>
        <PropRow $mt={8}>
          <PropLabel>Dynamic Pixels Per Unit</PropLabel>
          <Field>1</Field>
        </PropRow>
        <PropRow>
          <PropLabel>Reference Pixels Per Unit</PropLabel>
          <Field>100</Field>
        </PropRow>
      </Body>

      <Head title="Graphic Raycaster" checked icon={<RaycasterIcon />} />
      <Body $h={92}>
        <PropRow>
          <PropLabel $disabled>Script</PropLabel>
          <Field $disabled>
            <RaycasterIcon size={11} color="#8a8a8a" accent="#8fb0cc" />
            <Push $w={2} />
            GraphicRaycaster
            <Push />
            <Target color="#999" />
            <Push $w={2} />
          </Field>
        </PropRow>
        <PropRow>
          <PropLabel>Ignore Reversed Graphics</PropLabel>
          <Check />
        </PropRow>
        <PropRow>
          <PropLabel>Blocking Objects</PropLabel>
          <Select value="None" />
        </PropRow>
        <PropRow>
          <PropLabel>Blocking Mask</PropLabel>
          <Select value="Everything" />
        </PropRow>
      </Body>
      <AddButton>Add Component</AddButton>
      <Highlight $x={0} $y={77} $w={465} $h={240} />
    </Panel>
  );
}

/* ---------- app ---------- */

const menus = [
  ['File', 33],
  ['Edit', 36],
  ['Assets', 51],
  ['GameObject', 86],
  ['Component', 82],
  ['PlayMaker', 75],
  ['Game Framework', 117],
  ['FORGE3D', 70],
  ['Package', 63],
  ['Vuplex', 53],
  ['Tools', 46],
  ['Window', 61],
  ['Help', 40],
];

function MainToolbar() {
  return (
    <MainBar>
      <ButtonGroup>
        <ToolButton $on>{eyeIcon}</ToolButton>
        <ToolButton>{moveIcon}</ToolButton>
        <ToolButton>{rotateIcon}</ToolButton>
        <ToolButton>{scaleIcon}</ToolButton>
        <ToolButton>{rectIcon}</ToolButton>
        <ToolButton>{transformIcon}</ToolButton>
        <ToolButton $w={30}>
          <ToolsIcon />
        </ToolButton>
      </ButtonGroup>
      <ButtonGroup>
        <ToolButton $w={63}>
          <Svg w={15}>
            <path d="M1.500 1.500h13v13h-13z" />
            <circle cx="7.500" cy="8.500" r="2.800" stroke="#c41e1e" />
            <path d="M3 13l2-2M10 6l3-3" stroke="#c41e1e" />
          </Svg>
          Center
        </ToolButton>
        <ToolButton $w={63}>
          <Svg w={15}>
            <circle cx="7" cy="7.500" r="6.300" strokeWidth="1" />
            <path
              d="M7 1v13M.8 7.500h12M2 4h10M2 11h6M7 1C2.500 5 2.500 10 7 14M7 1c3 2 3.500 5 3.300 8"
              strokeWidth="1"
            />
            <circle cx="12" cy="12" r="2.600" fill="#c8c8c8" stroke="#c41e1e" />
          </Svg>
          Global
        </ToolButton>
      </ButtonGroup>
      <ButtonGroup>
        <ToolButton $w={30}>
          <Svg>
            <path d="M4 1v12M8.500 1v6M13 1v4M1 4h13M1 9h6" strokeWidth="1.100" />
            <path d="M8 8.500h3.500q2.700 0 2.700 2.500t-2.700 2.500H8" stroke="#c41e1e" strokeWidth="2" />
          </Svg>
        </ToolButton>
      </ButtonGroup>
      <Push $w={475} />
      <ButtonGroup>
        <ToolButton $w={30}>
          <Svg w={10} h={12} box="1 0 10 12">
            <path d="M1 .5v11L9.700 6z" fill="#555" stroke="none" />
          </Svg>
        </ToolButton>
        <ToolButton $w={31}>
          <Svg w={9} h={11} box="0 0 9 11">
            <path d="M.5 0h3v11h-3zM5.500 0h3v11h-3z" fill="#555" stroke="none" />
          </Svg>
        </ToolButton>
        <ToolButton $off $w={31}>
          <Svg w={11} h={11} box="0 0 11 11">
            <path d="M.5 .3v10.400L7.500 5.500zM8.300 .3h2v10.400h-2z" fill="#7c7c7c" stroke="none" />
          </Svg>
        </ToolButton>
      </ButtonGroup>
      <Push />
      <ButtonGroup>
        <ToolButton $w={30}>
          <Svg w={13} box="0 0 13 13">
            <circle cx="6.500" cy="6.500" r="2.300" />
            <circle cx="6.500" cy="6.500" r="5.300" strokeDasharray="1.500 2.660" strokeWidth="1.700" />
          </Svg>
        </ToolButton>
      </ButtonGroup>
      <ButtonGroup>
        <ToolButton $w={30}>
          <Svg w={15} h={11} box="0 0 15 11">
            <path
              d="M3.500 10.500a3 3 0 0 1-.3-5.900 4 4 0 0 1 7.600-.8 3.400 3.400 0 0 1 .7 6.700z"
              fill="#555"
              stroke="none"
            />
          </Svg>
        </ToolButton>
      </ButtonGroup>
      <Selects>
        <MainSelect $w={80}>
          Account
          <Caret />
        </MainSelect>
        <MainSelect $w={80}>
          Layers
          <Caret />
        </MainSelect>
        <MainSelect $w={110}>
          Layout
          <Caret />
        </MainSelect>
      </Selects>
    </MainBar>
  );
}

export default function App() {
  return (
    <Editor>
      <GlobalStyle />
      <MenuBar>
        {menus.map(([name, w]) => (
          <MenuItem key={name} $w={w}>
            {name}
          </MenuItem>
        ))}
      </MenuBar>
      <MainToolbar />
      <Workspace>
        <Column $rows="410px 531px">
          <ScenePanel />
          <GamePanel />
        </Column>
        <Column $rows="415px 526px">
          <HierarchyPanel />
          <ProjectPanel />
        </Column>
        <InspectorPanel />
      </Workspace>
    </Editor>
  );
}
